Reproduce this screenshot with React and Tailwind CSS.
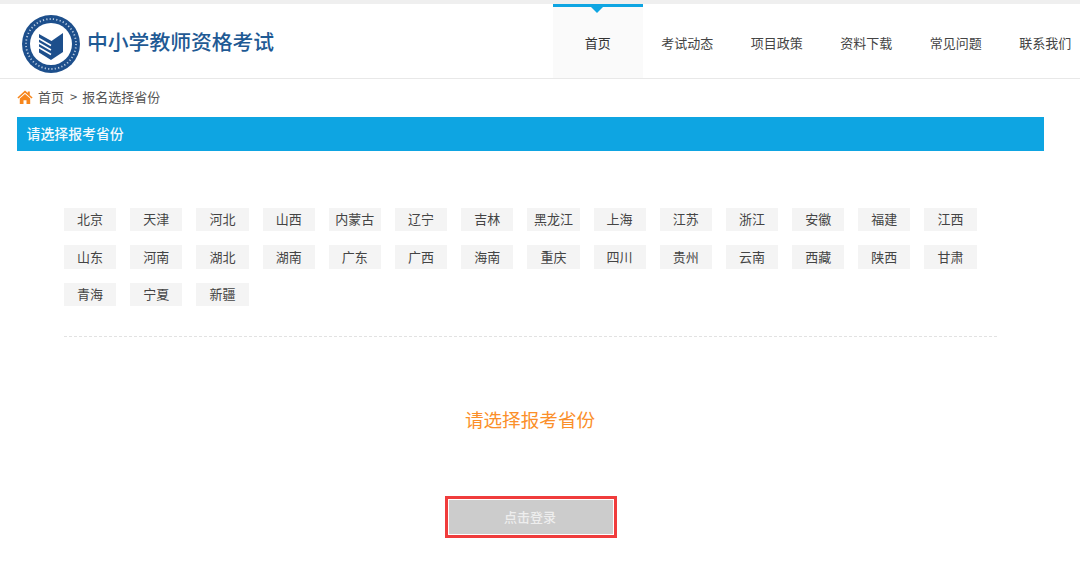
const nav = ['首页', '考试动态', '项目政策', '资料下载', '常见问题', '联系我们'];

const provinces = [
  '北京', '天津', '河北', '山西', '内蒙古', '辽宁', '吉林', '黑龙江', '上海', '江苏', '浙江', '安徽', '福建', '江西',
  '山东', '河南', '湖北', '湖南', '广东', '广西', '海南', '重庆', '四川', '贵州', '云南', '西藏', '陕西', '甘肃',
  '青海', '宁夏', '新疆',
];

function Logo() {
  return (
    <svg width="58" height="58" viewBox="0 0 58 58" className="shrink-0">
      <circle cx="29" cy="29" r="29" fill="#1d4f8c" />
      <circle cx="29" cy="29" r="25" fill="none" stroke="#b9cbe0" strokeWidth="1.800" strokeDasharray="1.200 2.200" />
      <circle cx="29" cy="29" r="21" fill="#fff" />
      <path d="M17 19l12.500 7 11.500-8v19l-12 8-12-7.500z" fill="#1d4f8c" />
      <path d="M16 23l13 7.500M16 27.500l13 7.500M16 32l13 7.500" stroke="#fff" strokeWidth="1.500" fill="none" />
    </svg>
  );
}

function HomeIcon() {
  return (
    <svg width="16" height="15" viewBox="0 0 16 15" className="shrink-0">
      <path d="M8 0.500L0.400 7.400l1.100 1.200L8 2.800l6.500 5.800 1.100-1.200L12.800 4.900V1.500h-2v1.600z" fill="#f7861c" />
      <path d="M8 4L2.800 8.600V14h3.700v-3.800h3V14h3.700V8.600z" fill="#f7861c" />
    </svg>
  );
}

export default function App() {
  return (
    <div className="h-[571px] overflow-hidden bg-white font-['Noto_Sans_CJK_SC','Liberation_Sans',sans-serif]">
      <div className="h-[4px] bg-[#efefef]" />

      <header className="flex h-[75px] border-b border-[#e8e8e8]">
        <div className="flex w-[553px] shrink-0 items-center gap-[7px] pl-[22px] pt-[5px]">
          <Logo />
          <h1 className="text-[20.800px] font-medium text-[#1f5a94] pb-[3px]">中小学教师资格考试</h1>
        </div>
        <nav className="flex">
          {nav.map((item, i) => (
            <a
              key={item}
              className={
                i === 0
                  ? 'relative flex w-[89.500px] shrink-0 items-center justify-center border-t-[3px] border-[#0ea5e2] bg-[#fafafa] text-[13px] text-[#333] pt-[1px]'
                  : 'flex w-[89.500px] shrink-0 items-center justify-center pt-[4px] text-[13px] text-[#444]'
              }
            >
              {item}
              {i === 0 && (
                <span className="absolute left-[38px] top-0 border-x-[6px] border-t-[6px] border-x-transparent border-t-[#0ea5e2]" />
              )}
            </a>
          ))}
        </nav>
      </header>

      <div className="flex h-[38px] items-center pl-[17px] pb-[2px] text-[13px] text-[#555]">
        <HomeIcon />
        <span className="ml-[5px]">首页</span>
        <span className="ml-[6px] mr-[5px]">&gt;</span>
        <span>报名选择省份</span>
      </div>

      <div className="ml-[17px] flex h-[34px] w-[1026.500px] items-center bg-[#0ea5e2] pl-[9.500px] pb-[1px] text-[13.900px] font-medium text-[#f2f9fd]">
        请选择报考省份
      </div>

      <div className="mx-[64px] mt-[57px] w-[933px] border-b border-dashed border-[#e2e2e2] pb-[30px]">
        <div className="grid grid-cols-[repeat(14,52.200px)] gap-x-[14px] gap-y-[14px]">
          {provinces.map((p) => (
            <span key={p} className="flex h-[23.400px] items-center justify-center bg-[#f4f4f4] pb-[1px] text-[13px] text-[#444]">
              {p}
            </span>
          ))}
        </div>
      </div>

      <p className="mt-[69px] text-center text-[18.600px] leading-[26px] text-[#fb8f2a] pr-[20px]">请选择报考省份</p>

      <div className="mt-[64px] flex justify-center pr-[18px]">
        <div className="border-[3px] border-[#f03c3c] p-[1px]">
          <button className="h-[34px] w-[164px] bg-[#cccccc] pb-[1px] pr-[2px] text-[13px] font-medium text-[#eeeeee]">点击登录</button>
        </div>
      </div>
    </div>
  );
}
